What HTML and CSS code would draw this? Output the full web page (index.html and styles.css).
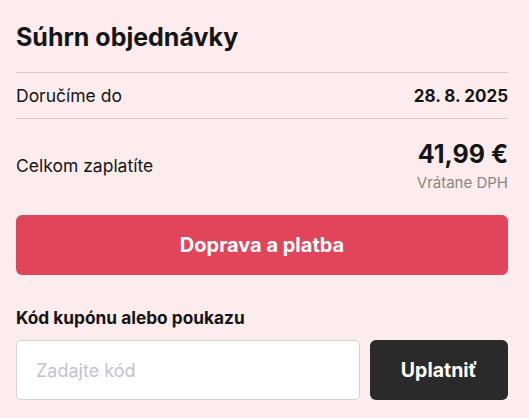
FILE: index.html
```html
<!DOCTYPE html>
<html lang="sk">
<head>
<meta charset="utf-8">
<link rel="stylesheet" href="styles.css">
</head>
<body>
<div class="summary">
  <h2 class="title">Súhrn objednávky</h2>
  <div class="row row-delivery">
    <span class="label">Doručíme do</span>
    <span class="date">28. 8. 2025</span>
  </div>
  <div class="row row-total">
    <span class="label">Celkom zaplatíte</span>
    <div class="price-block">
      <div class="price">41,99 €</div>
      <div class="vat">Vrátane DPH</div>
    </div>
  </div>
  <button class="btn-primary">Doprava a platba</button>
  <div class="coupon">
    <div class="coupon-label">Kód kupónu alebo poukazu</div>
    <div class="coupon-form">
      <input class="coupon-input" type="text" placeholder="Zadajte kód">
      <button class="btn-dark">Uplatniť</button>
    </div>
  </div>
</div>
</body>
</html>
```
FILE: styles.css
```css
html, body {
  margin: 0;
  padding: 0;
  background: #fdeced;
}
body {
  font-family: Inter, "Noto Sans", sans-serif;
  color: #151515;
}
.summary {
  width: 492px;
  padding: 22px 0 0 16px;
}
.title {
  margin: 0;
  font-size: 25px;
  font-weight: 700;
  line-height: 30px;
  padding-bottom: 20px;
  border-bottom: 1px solid #dcc3c6;
}
.row {
  display: flex;
  justify-content: space-between;
  align-items: center;
}
.label {
  font-size: 17.5px;
}
.row-delivery {
  height: 45px;
  border-bottom: 1px solid #dcc3c6;
}
.date {
  font-size: 17px;
  font-weight: 700;
}
.row-total {
  padding: 20px 0 23px;
}
.price-block {
  text-align: right;
}
.price {
  font-size: 25px;
  font-weight: 700;
  line-height: 30px;
}
.vat {
  margin-top: 5px;
  font-size: 15px;
  line-height: 18px;
  color: #8a8585;
}
.btn-primary {
  display: block;
  width: 100%;
  height: 60px;
  border: 0;
  border-radius: 6px;
  background: #e0455b;
  color: #fff;
  font-family: inherit;
  font-size: 20px;
  font-weight: 700;
}
.coupon {
  padding-top: 32px;
}
.coupon-label {
  font-size: 17.3px;
  font-weight: 700;
  line-height: 21px;
  margin-bottom: 12px;
}
.coupon-form {
  display: flex;
  gap: 10px;
}
.coupon-input {
  flex: 1;
  min-width: 0;
  height: 60px;
  box-sizing: border-box;
  border: 1px solid #d5d2d6;
  border-radius: 5px;
  background: #fff;
  padding: 0 19px;
  font-family: inherit;
  font-size: 18px;
  color: #151515;
}
.coupon-input::placeholder {
  color: #c3c2cf;
}
.btn-dark {
  width: 138px;
  height: 60px;
  border: 0;
  border-radius: 6px;
  background: #2a2a2a;
  color: #fff;
  font-family: inherit;
  font-size: 19.5px;
  font-weight: 700;
}
```
